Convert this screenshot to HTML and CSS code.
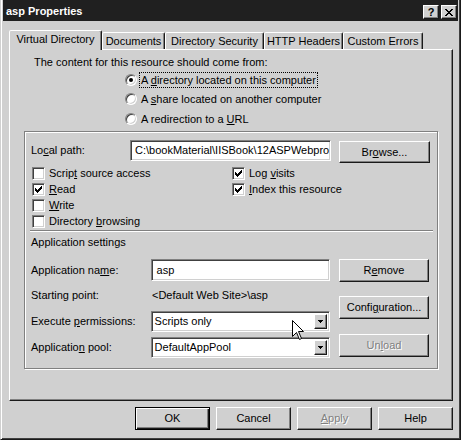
FILE: index.html
```html
<!DOCTYPE html>
<html>
<head>
<meta charset="utf-8">
<title>asp Properties</title>
<link rel="stylesheet" href="styles.css">
</head>
<body>
<div class="window">
  <div class="titlebar">
    <span class="title">asp Properties</span>
    <div class="tbtns">
      <span class="tbtn help">?</span>
      <span class="tbtn close">
        <svg width="8" height="7" viewBox="0 0 8 7" shape-rendering="crispEdges">
          <path d="M0 0h2v1h-2zM6 0h2v1h-2zM1 1h2v1h-2zM5 1h2v1h-2zM2 2h4v1h-4zM3 3h2v1h-2zM2 4h4v1h-4zM1 5h2v1h-2zM5 5h2v1h-2zM0 6h2v1h-2zM6 6h2v1h-2z" fill="#000"/>
        </svg>
      </span>
    </div>
  </div>
  <div class="main">
    <div class="tabs">
      <div class="tab active t-vd">Virtual Directory</div>
      <div class="tab t-doc">Documents</div>
      <div class="tab t-ds">Directory Security</div>
      <div class="tab t-http">HTTP Headers</div>
      <div class="tab t-ce">Custom Errors</div>
    </div>
    <div class="panel">
      <div class="intro">The content for this resource should come from:</div>
      <div class="radios">
        <div class="radio-row"><span class="radio checked"></span><span class="rlabel focus">A <u>d</u>irectory located on this computer</span></div>
        <div class="radio-row"><span class="radio"></span><span class="rlabel">A <u>s</u>hare located on another computer</span></div>
        <div class="radio-row"><span class="radio"></span><span class="rlabel">A redirection to a <u>U</u>RL</span></div>
      </div>
      <div class="group">
        <div class="path-row">
          <span class="path-lbl">Lo<u>c</u>al path:</span>
          <div class="textbox path-box">C:\bookMaterial\IISBook\12ASPWebpro</div>
          <div class="btn browse">Br<u>o</u>wse...</div>
        </div>
        <div class="checks">
          <div class="check-col left-col">
            <div class="check-row"><span class="checkbox"></span><span class="clabel">Scrip<u>t</u> source access</span></div>
            <div class="check-row"><span class="checkbox"><svg width="7" height="7" viewBox="0 0 7 7" shape-rendering="crispEdges"><path d="M0 2h1v3h-1zM1 3h1v3h-1zM2 4h1v3h-1zM3 3h1v3h-1zM4 2h1v3h-1zM5 1h1v3h-1zM6 0h1v3h-1z" fill="#000"/></svg></span><span class="clabel"><u>R</u>ead</span></div>
            <div class="check-row"><span class="checkbox"></span><span class="clabel"><u>W</u>rite</span></div>
            <div class="check-row"><span class="checkbox"></span><span class="clabel">Directory <u>b</u>rowsing</span></div>
          </div>
          <div class="check-col">
            <div class="check-row"><span class="checkbox"><svg width="7" height="7" viewBox="0 0 7 7" shape-rendering="crispEdges"><path d="M0 2h1v3h-1zM1 3h1v3h-1zM2 4h1v3h-1zM3 3h1v3h-1zM4 2h1v3h-1zM5 1h1v3h-1zM6 0h1v3h-1z" fill="#000"/></svg></span><span class="clabel">Log <u>v</u>isits</span></div>
            <div class="check-row"><span class="checkbox"><svg width="7" height="7" viewBox="0 0 7 7" shape-rendering="crispEdges"><path d="M0 2h1v3h-1zM1 3h1v3h-1zM2 4h1v3h-1zM3 3h1v3h-1zM4 2h1v3h-1zM5 1h1v3h-1zM6 0h1v3h-1z" fill="#000"/></svg></span><span class="clabel"><u>I</u>ndex this resource</span></div>
          </div>
        </div>
        <div class="sep"></div>
        <div class="app-title">Application settings</div>
        <div class="app">
          <div class="app-fields">
            <div class="field-row name-row"><span class="flbl">Application na<u>m</u>e:</span><div class="textbox app-box">asp</div></div>
            <div class="field-row sp-row"><span class="flbl">Starting point:</span><span class="fval">&lt;Default Web Site&gt;\asp</span></div>
            <div class="field-row exec-row"><span class="flbl">Execute <u>p</u>ermissions:</span>
              <div class="combo"><span class="combo-text">Scripts only</span><span class="combo-btn"><svg width="5" height="3" viewBox="0 0 5 3" shape-rendering="crispEdges"><path d="M0 0h5v1h-5zM1 1h3v1h-3zM2 2h1v1h-1z" fill="#000"/></svg></span></div>
            </div>
            <div class="field-row pool-row"><span class="flbl">Applicatio<u>n</u> pool:</span>
              <div class="combo"><span class="combo-text">DefaultAppPool</span><span class="combo-btn"><svg width="5" height="3" viewBox="0 0 5 3" shape-rendering="crispEdges"><path d="M0 0h5v1h-5zM1 1h3v1h-3zM2 2h1v1h-1z" fill="#000"/></svg></span></div>
            </div>
          </div>
          <div class="app-btns">
            <div class="btn remove">R<u>e</u>move</div>
            <div class="btn config">Confi<u>g</u>uration...</div>
            <div class="btn unload disabled">Un<u>l</u>oad</div>
          </div>
        </div>
      </div>
    </div>
    <div class="buttons">
      <div class="btn dlg default">OK</div>
      <div class="btn dlg">Cancel</div>
      <div class="btn dlg disabled"><u>A</u>pply</div>
      <div class="btn dlg">Help</div>
    </div>
  </div>
  <svg class="cursor" width="12" height="21" viewBox="0 0 12 21">
    <path d="M0.5 0.5V16.5L4.5 12.5L7.5 19.5L9.5 18.5L6.5 11.5H11.5Z" fill="#fff" stroke="#000" stroke-width="1" stroke-linejoin="miter"/>
  </svg>
</div>
</body>
</html>
```

FILE: styles.css
```css
* { box-sizing: border-box; margin: 0; padding: 0; }
html, body { width: 461px; height: 440px; overflow: hidden; }
body {
  background: #d0d0d0;
  font-family: "Liberation Sans", Arial, sans-serif;
  font-size: 11px;
  line-height: 13px;
  color: #000;
}
u { text-decoration: underline; text-underline-offset: 1px; }

.window {
  position: relative;
  width: 461px;
  height: 440px;
  display: flex;
  flex-direction: column;
  background: #d0d0d0;
  border-left: 1px solid #d0d0d0;
  border-right: 1px solid #1a1a1a;
  border-bottom: 1px solid #1a1a1a;
  padding: 0 2px 1px 2px;
  box-shadow: inset 1px 0 #fff, inset -1px -1px #404040;
}

.titlebar {
  height: 21px;
  flex: none;
  background: #202020;
  color: #fff;
  display: flex;
  align-items: flex-start;
  padding: 5px 1px 0 3px;
}
.title { font-weight: bold; font-size: 11px; line-height: 13px; }
.tbtns { margin-left: auto; display: flex; gap: 2px; }
.tbtn {
  width: 16px;
  height: 14px;
  background: #d0d0d0;
  color: #000;
  border: 1px solid;
  border-color: #fff #1a1a1a #1a1a1a #fff;
  box-shadow: inset -1px -1px #808080;
  display: flex;
  align-items: center;
  justify-content: center;
  font-weight: bold;
  font-size: 11px;
  line-height: 11px;
}
.tbtn.help { padding-top: 1px; }

.main {
  flex: 1;
  display: flex;
  flex-direction: column;
  padding: 9px 5px 0 6px;
}

.tabs { display: flex; align-items: flex-end; height: 19px; flex: none; }
.tab {
  height: 17px;
  padding-top: 2px;
  text-align: center;
  white-space: nowrap;
  border: 1px solid;
  border-bottom: none;
  border-color: #fff #1a1a1a transparent #fff;
  box-shadow: inset -1px 0 #808080;
  border-radius: 2px 2px 0 0;
  background: #d0d0d0;
}
.tab.active {
  height: 20px;
  margin-bottom: -1px;
  position: relative;
  z-index: 1;
}
.t-vd { width: 93px; }
.t-doc { width: 63px; }
.t-ds { width: 99px; }
.t-http { width: 79px; }
.t-ce { width: 80px; }

.panel {
  flex: none;
  height: 352px;
  border: 1px solid;
  border-color: #fff #1a1a1a #1a1a1a #fff;
  box-shadow: inset -1px -1px #808080;
}

.intro { margin: 5px 0 0 24px; line-height: 14px; height: 14px; }
.radios {
  margin: 1px 0 0 115px;
  display: grid;
  grid-template-rows: 19px 20px 19px;
}
.radio-row { display: flex; align-items: center; }
.radio {
  position: relative;
  flex: none;
  width: 12px;
  height: 12px;
  border-radius: 50%;
  background: #fff;
  border: 1px solid;
  border-color: #808080 #fff #fff #808080;
  box-shadow: inset 1px 1px #404040, inset -1px -1px #d0d0d0;
}
.radio.checked::after {
  content: "";
  position: absolute;
  left: 3px;
  top: 3px;
  width: 4px;
  height: 4px;
  border-radius: 50%;
  background: #000;
}
.rlabel {
  margin-left: 2px;
  padding: 0 1px;
  line-height: 14px;
  border: 1px dotted transparent;
  white-space: nowrap;
}
.rlabel.focus { border-color: #000; }

.group {
  margin: 3px 0 0 14px;
  width: 414px;
  height: 238px;
  border: 1px solid #808080;
  box-shadow: inset 1px 1px #fff, 1px 1px #fff;
}

.path-row {
  display: flex;
  align-items: flex-start;
  margin-top: 8px;
  height: 23px;
  padding-left: 6px;
}
.path-lbl { width: 99px; line-height: 21px; }

.textbox {
  background: #fff;
  border: 1px solid;
  border-color: #808080 #fff #fff #808080;
  box-shadow: inset 1px 1px #404040, inset -1px -1px #d0d0d0;
  white-space: nowrap;
  overflow: hidden;
  display: flex;
  align-items: center;
}
.path-box { width: 201px; height: 21px; padding-left: 4px; }

.btn {
  display: flex;
  align-items: center;
  justify-content: center;
  background: #d0d0d0;
  border: 1px solid;
  border-color: #fff #1a1a1a #1a1a1a #fff;
  box-shadow: inset -1px -1px #808080;
  white-space: nowrap;
}
.btn.disabled { color: #808080; text-shadow: 1px 1px #fff; }
.browse { width: 91px; height: 22px; margin: 1px 0 0 8px; }

.checks { display: flex; margin-top: 2px; padding-left: 7px; }
.check-col { display: flex; flex-direction: column; }
.left-col { width: 200px; }
.check-row { display: flex; align-items: center; height: 16px; }
.checkbox {
  flex: none;
  width: 13px;
  height: 13px;
  background: #fff;
  border: 1px solid;
  border-color: #808080 #fff #fff #808080;
  box-shadow: inset 1px 1px #404040, inset -1px -1px #d0d0d0;
  display: flex;
  align-items: center;
  justify-content: center;
}
.checkbox svg { display: block; }
.clabel { margin-left: 4px; white-space: nowrap; }

.sep {
  margin: 1px 0 0 5px;
  width: 403px;
  height: 2px;
  border-top: 1px solid #808080;
  border-bottom: 1px solid #fff;
}
.app-title { margin-top: 3px; padding-left: 6px; line-height: 14px; }

.app { display: flex; margin-top: 10px; padding-left: 6px; }
.app-fields { width: 299px; display: flex; flex-direction: column; }
.field-row { display: flex; align-items: center; }
.flbl { width: 120px; white-space: nowrap; }
.fval { white-space: nowrap; padding-left: 1px; }
.name-row { height: 22px; }
.sp-row { height: 22px; margin-top: 3px; }
.exec-row { height: 21px; margin-top: 5px; }
.pool-row { height: 21px; margin-top: 5px; }
.app-box { width: 180px; height: 22px; padding-left: 5px; }

.combo {
  width: 180px;
  height: 21px;
  display: flex;
  align-items: stretch;
  background: #fff;
  border: 1px solid;
  border-color: #808080 #fff #fff #808080;
  box-shadow: inset 1px 1px #404040, inset -1px -1px #d0d0d0;
  padding: 2px 2px 2px 2px;
}
.combo-text { flex: 1; display: flex; align-items: center; padding-left: 1px; white-space: nowrap; }
.combo-btn {
  width: 13px;
  flex: none;
  background: #d0d0d0;
  border: 1px solid;
  border-color: #fff #1a1a1a #1a1a1a #fff;
  box-shadow: inset -1px -1px #808080;
  display: flex;
  align-items: center;
  justify-content: center;
}
.combo-btn svg { display: block; }

.app-btns { display: flex; flex-direction: column; margin-left: 9px; }
.app-btns .btn { width: 90px; height: 23px; }
.config { margin-top: 14px; }
.unload { margin-top: 15px; }

.buttons {
  display: flex;
  justify-content: flex-end;
  gap: 6px;
  margin-top: 6px;
}
.dlg { width: 75px; height: 23px; }
.dlg.default {
  border: 1px solid #000;
  box-shadow: inset 1px 1px #fff, inset -1px -1px #1a1a1a, inset -2px -2px #808080;
}

.cursor { position: absolute; left: 291px; top: 320px; display: block; }
```
